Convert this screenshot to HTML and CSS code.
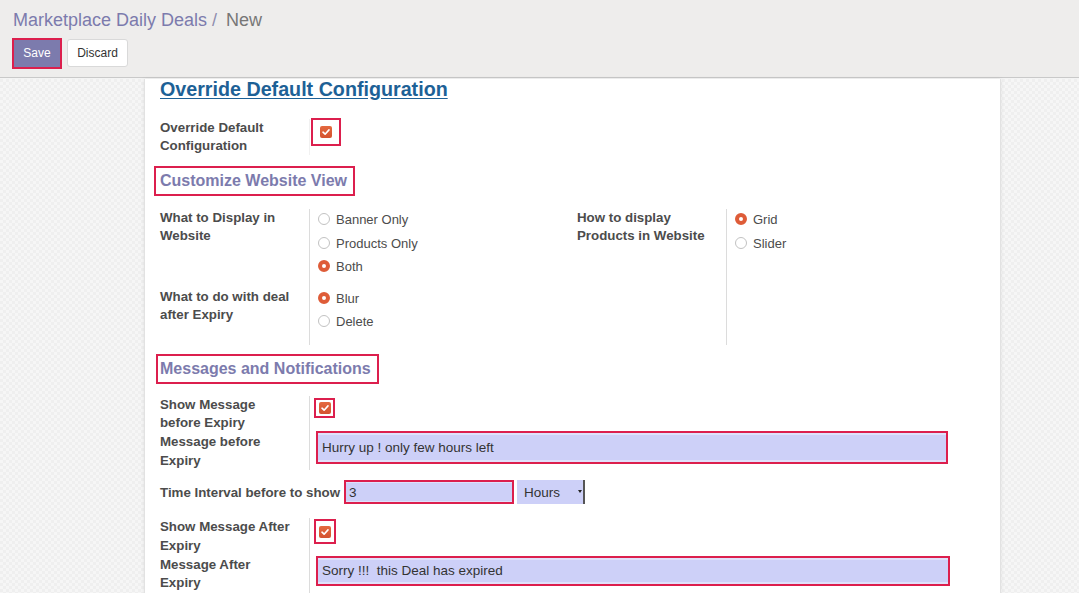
FILE: index.html
```html
<!DOCTYPE html>
<html>
<head>
<meta charset="utf-8">
<link rel="stylesheet" href="styles.css">
</head>
<body>
<div class="cp">
  <div class="bc"><span class="bc-link">Marketplace Daily Deals</span><span class="bc-sep">/</span><span class="bc-cur">New</span></div>
  <div class="btns">
    <span class="hl hl-save"><span class="btn save">Save</span></span>
    <span class="btn discard">Discard</span>
  </div>
</div>
<div class="main">
  <div class="sheet">
    <h1 class="title">Override Default Configuration</h1>

    <div class="row row-override">
      <div class="lbl">Override Default<br>Configuration</div>
      <div class="val val-faint">
        <span class="hl hl-cb1"><span class="cb"><svg viewBox="0 0 12 12" width="12" height="12"><path d="M3 6.2 L5.1 8.2 L9 3.9" fill="none" stroke="#fff" stroke-width="1.6" stroke-linecap="round" stroke-linejoin="round"/></svg></span></span>
      </div>
    </div>

    <div class="hl sec sec1">Customize Website View</div>

    <div class="group">
      <div class="gcol">
        <div class="grow">
          <div class="lbl">What to Display in<br>Website</div>
          <div class="val">
            <div class="radio"><span class="rd"></span>Banner Only</div>
            <div class="radio"><span class="rd"></span>Products Only</div>
            <div class="radio"><span class="rd on"></span>Both</div>
          </div>
        </div>
        <div class="grow last">
          <div class="lbl">What to do with deal<br>after Expiry</div>
          <div class="val">
            <div class="radio"><span class="rd on"></span>Blur</div>
            <div class="radio"><span class="rd"></span>Delete</div>
          </div>
        </div>
      </div>
      <div class="gcol">
        <div class="grow fill">
          <div class="lbl">How to display<br>Products in Website</div>
          <div class="val">
            <div class="radio"><span class="rd on"></span>Grid</div>
            <div class="radio"><span class="rd"></span>Slider</div>
          </div>
        </div>
      </div>
    </div>

    <div class="hl sec sec2">Messages and Notifications</div>

    <div class="mrow mrow-a">
      <div class="lbl">Show Message<br>before Expiry</div>
      <div class="val">
        <span class="hl hl-cb2"><span class="cb"><svg viewBox="0 0 12 12" width="12" height="12"><path d="M3 6.2 L5.1 8.2 L9 3.9" fill="none" stroke="#fff" stroke-width="1.6" stroke-linecap="round" stroke-linejoin="round"/></svg></span></span>
      </div>
    </div>
    <div class="mrow mrow-b">
      <div class="lbl">Message before<br>Expiry</div>
      <div class="val">
        <span class="hl hl-input wide1"><span class="inp">Hurry up ! only few hours left</span></span>
      </div>
    </div>
    <div class="trow">
      <span class="lbl-inline">Time Interval before to show</span>
      <span class="hl hl-input small"><span class="inp">3</span></span>
      <span class="sel">Hours<span class="sel-arrow"></span></span>
    </div>
    <div class="mrow mrow-d">
      <div class="lbl">Show Message After<br>Expiry</div>
      <div class="val">
        <span class="hl hl-cb3"><span class="cb"><svg viewBox="0 0 12 12" width="12" height="12"><path d="M3 6.2 L5.1 8.2 L9 3.9" fill="none" stroke="#fff" stroke-width="1.6" stroke-linecap="round" stroke-linejoin="round"/></svg></span></span>
      </div>
    </div>
    <div class="mrow mrow-e">
      <div class="lbl">Message After<br>Expiry</div>
      <div class="val">
        <span class="hl hl-input wide2"><span class="inp">Sorry !!!&nbsp; this Deal has expired</span></span>
      </div>
    </div>
  </div>
</div>
</body>
</html>
```

FILE: styles.css
```css
html, body {
  margin: 0;
  padding: 0;
  height: 100%;
  overflow: hidden;
}
body {
  font-family: "Liberation Sans", Arial, sans-serif;
  color: #4c4c4c;
  background: #f4f4f4;
}

/* control panel */
.cp {
  background: #eeedec;
  border-bottom: 1px solid #c9c9c9;
  height: 78px;
  box-sizing: border-box;
  padding: 8px 12px 0 12px;
}
.bc {
  font-size: 18px;
  line-height: 24px;
  height: 24px;
}
.bc-link { color: #7c7bad; padding-left: 1px; }
.bc-sep { color: #8f8eaf; margin: 0 9px 0 5px; }
.bc-cur { color: #777; }

.btns {
  margin-top: 6px;
  display: flex;
  align-items: flex-start;
  gap: 5px;
}
.hl {
  border: 2px solid #dc1f4d;
  box-sizing: border-box;
}
.hl-save {
  display: inline-flex;
  width: 50px;
  height: 31px;
}
.btn {
  font-size: 12px;
  line-height: 27px;
  text-align: center;
  box-sizing: border-box;
}
.save {
  background: #7c7bad;
  color: #fff;
  width: 100%;
  height: 100%;
  line-height: 27px;
}
.discard {
  margin-top: 1px;
  background: #fff;
  color: #333;
  border: 1px solid #d9d9d9;
  border-radius: 3px;
  width: 61px;
  height: 28px;
  line-height: 26px;
}

/* main */
.main {
  height: calc(100% - 78px);
  background-color: #f3f3f3;
  background-image: repeating-conic-gradient(#f6f6f6 0 25%, #efefef 0 50%);
  background-size: 6px 6px;
  padding-left: 144px;
}
.sheet {
  width: 857px;
  height: 100%;
  box-sizing: border-box;
  background: #fff;
  border-left: 1px solid #e2e2e2;
  border-right: 1px solid #e2e2e2;
  box-shadow: 0 0 4px rgba(0,0,0,0.08);
  padding-left: 15px;
}
.title {
  margin: 1px 0 0 0;
  font-size: 19.7px;
  line-height: 20px;
  font-weight: bold;
  color: #1d6196;
  text-decoration: underline;
  text-underline-offset: 2px;
}

.lbl {
  width: 149px;
  flex: none;
  font-size: 13.3px;
  font-weight: bold;
  line-height: 18px;
  color: #4c4c4c;
}
.val {
  border-left: 1px solid #dcdcdc;
  flex: 1;
}
.val-faint { border-left-color: #f1f1f1; }

.row-override {
  display: flex;
  margin-top: 20px;
}
.row-override .val { padding-left: 1px; }
.hl-cb1 {
  display: inline-flex;
  width: 30px;
  height: 28px;
  align-items: center;
  justify-content: center;
  margin-top: -1px;
}
.cb {
  width: 12px;
  height: 12px;
  border-radius: 2px;
  background: linear-gradient(#e4693f, #d4522f);
  display: inline-flex;
  align-items: center;
  justify-content: center;
}
.cb svg { display: block; }

.sec {
  display: inline-block;
  font-size: 16px;
  font-weight: bold;
  color: #7c7bad;
  height: 30px;
  line-height: 26px;
}
.sec1 {
  margin-top: 11px;
  margin-left: -6px;
  padding: 0 6px 0 4px;
  width: 201px;
}
.sec2 {
  margin-top: 9px;
  margin-left: -4px;
  padding: 0 5px 0 2px;
  width: 223px;
}

/* group */
.group {
  display: flex;
  margin-top: 13px;
}
.gcol {
  width: 417px;
  display: flex;
  flex-direction: column;
}
.grow {
  display: flex;
}
.grow .val {
  padding-left: 8px;
  padding-bottom: 8px;
}
.grow.last .val { padding-bottom: 10px; }
.grow.fill { flex: 1; }
.radio {
  height: 23.5px;
  display: flex;
  align-items: center;
  font-size: 13px;
  color: #4c4c4c;
  position: relative;
  top: -1px;
}
.rd {
  width: 12px;
  height: 12px;
  box-sizing: border-box;
  border-radius: 50%;
  border: 1px solid #c2c2c2;
  background: #fff;
  margin-right: 6px;
  margin-top: -1px;
  flex: none;
}
.rd.on {
  border: 4px solid #de5c38;
  background: #fff;
}

/* messages */
.mrow {
  display: flex;
}
.mrow .lbl { line-height: 18.7px; }
.mrow-a { margin-top: 12px; }
.mrow-a .val { padding-left: 4px; padding-top: 2px; }
.hl-cb2, .hl-cb3 {
  display: inline-flex;
  align-items: center;
  justify-content: center;
  width: 21px;
  height: 20px;
}
.hl-cb3 { width: 22px; height: 25px; }
.mrow-b .val { padding-left: 6px; }
.hl-input {
  display: inline-flex;
  align-items: stretch;
  background: #fff;
}
.inp {
  flex: 1;
  background: #cdd0f8;
  border-top: 2px solid #dfe1fb;
  border-bottom: 2px solid #dfe1fb;
  font-size: 13.5px;
  color: #333;
  display: flex;
  align-items: center;
  padding-left: 4px;
  white-space: nowrap;
}
.wide1 {
  width: 632px;
  height: 33px;
  margin-top: -2px;
}
.wide2 {
  width: 634px;
  height: 30px;
  margin-top: 0;
}
.trow {
  display: flex;
  align-items: center;
  margin-top: 10px;
  height: 24px;
}
.lbl-inline {
  font-size: 13.3px;
  font-weight: bold;
  color: #4c4c4c;
  margin-right: 4px;
  padding-top: 1px;
}
.small {
  width: 170px;
  height: 24px;
}
.small .inp {
  border-top-width: 1px;
  border-bottom-width: 1px;
  padding-left: 3px;
}
.sel {
  margin-left: 3px;
  width: 68px;
  height: 24px;
  background: #cdd0f8;
  font-size: 13.5px;
  color: #333;
  display: flex;
  align-items: center;
  padding-left: 7px;
  box-sizing: border-box;
  position: relative;
  border-right: 2px solid #555;
}
.sel-arrow {
  position: absolute;
  right: 1px;
  top: 10px;
  width: 0;
  height: 0;
  border-left: 2px solid transparent;
  border-right: 2px solid transparent;
  border-top: 3px solid #222;
}
.mrow-d { margin-top: 14px; }
.mrow-d .val { padding-left: 4px; padding-top: 1px; }
.mrow-e .val { padding-left: 6px; }
```
